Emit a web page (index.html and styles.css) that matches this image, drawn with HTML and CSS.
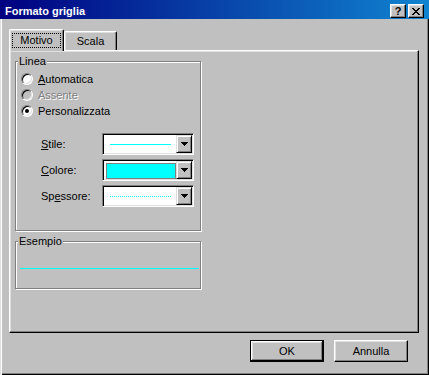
FILE: index.html
```html
<!DOCTYPE html>
<html lang="it">
<head>
    <meta charset="UTF-8">
    <title>Formato griglia</title>
    <link rel="stylesheet" href="styles.css">
</head>
<body>
    <div class="window">
        <div class="titlebar">
            <span class="title">Formato griglia</span>
            <div class="title-buttons">
                <span class="tbtn help">?</span>
                <span class="tbtn">
                    <svg width="8" height="7" viewBox="0 0 8 7">
                        <path d="M0 0h2v1h-2zM6 0h2v1h-2zM1 1h2v1h-2zM5 1h2v1h-2zM2 2h4v1h-4zM3 3h2v1h-2zM2 4h4v1h-4zM1 5h2v1h-2zM5 5h2v1h-2zM0 6h2v1h-2zM6 6h2v1h-2z"/>
                    </svg>
                </span>
            </div>
        </div>

        <div class="dialog">
            <div class="tabs">
                <div class="tab active"><span class="focus">Motivo</span></div>
                <div class="tab">Scala</div>
            </div>

            <div class="panel">
                <div class="group linea">
                    <div class="group-title">Linea</div>
                    <div class="options">
                        <div class="option"><span class="radio"></span><span><u>A</u>utomatica</span></div>
                        <div class="option disabled"><span class="radio"></span><span>Assente</span></div>
                        <div class="option"><span class="radio checked"></span><span>Personalizzata</span></div>
                    </div>

                    <div class="fields">
                        <span class="field-label"><u>S</u>tile:</span>
                        <div class="combo">
                            <div class="combo-value"><span class="line"></span></div>
                            <span class="drop">
                                <svg width="7" height="4" viewBox="0 0 7 4"><path d="M0 0h7v1h-7zM1 1h5v1h-5zM2 2h3v1h-3zM3 3h1v1h-1z"/></svg>
                            </span>
                        </div>

                        <span class="field-label"><u>C</u>olore:</span>
                        <div class="combo">
                            <div class="combo-value"><span class="swatch"></span></div>
                            <span class="drop">
                                <svg width="7" height="4" viewBox="0 0 7 4"><path d="M0 0h7v1h-7zM1 1h5v1h-5zM2 2h3v1h-3zM3 3h1v1h-1z"/></svg>
                            </span>
                        </div>

                        <span class="field-label">Sp<u>e</u>ssore:</span>
                        <div class="combo">
                            <div class="combo-value"><span class="line dotted"></span></div>
                            <span class="drop">
                                <svg width="7" height="4" viewBox="0 0 7 4"><path d="M0 0h7v1h-7zM1 1h5v1h-5zM2 2h3v1h-3zM3 3h1v1h-1z"/></svg>
                            </span>
                        </div>
                    </div>
                </div>

                <div class="group esempio">
                    <div class="group-title">Esempio</div>
                    <div class="sample-line"></div>
                </div>
            </div>

            <div class="actions">
                <button class="btn default">OK</button>
                <button class="btn">Annulla</button>
            </div>
        </div>
    </div>
</body>
</html>
```

FILE: styles.css
```css
* {
    box-sizing: border-box;
}

body {
    margin: 0;
    font-family: "Liberation Sans", Arial, sans-serif;
    font-size: 11px;
    line-height: 13px;
    color: #000;
    background: #c0c0c0;
}

.window {
    width: 429px;
    height: 375px;
    background: #c0c0c0;
    display: flex;
    flex-direction: column;
}

/* title bar */
.titlebar {
    height: 19px;
    flex-shrink: 0;
    display: flex;
    align-items: flex-end;
    justify-content: space-between;
    padding: 0 5px 1px 5px;
    background: linear-gradient(to right, #000080, #1084d0);
    color: #fff;
    font-weight: bold;
}

.title-buttons {
    display: flex;
    gap: 2px;
}

.tbtn {
    width: 16px;
    height: 14px;
    display: flex;
    align-items: center;
    justify-content: center;
    background: #c0c0c0;
    color: #000;
    border: 1px solid;
    border-color: #fff #000 #000 #fff;
    box-shadow: inset -1px -1px #808080, inset 1px 1px #dfdfdf;
}

.tbtn.help {
    font-size: 11px;
    line-height: 11px;
}

/* dialog body */
.dialog {
    flex: 1;
    padding: 10px 10px 0 9px;
    box-shadow: inset 1px 0 #dfdfdf, inset 2px 0 #fff, inset -1px -1px #000, inset -2px -2px #808080;
}

.tabs {
    display: flex;
    align-items: flex-end;
    height: 21px;
}

.tab {
    height: 19px;
    display: flex;
    align-items: center;
    justify-content: center;
    border: 1px solid;
    border-bottom: 0;
    border-color: #fff #000 #000 #fff;
    border-radius: 2px 2px 0 0;
    box-shadow: inset -1px 0 #808080, inset 1px 1px #dfdfdf;
    background: #c0c0c0;
    width: 53px;
}

.tab.active {
    width: 55px;
    height: 22px;
    margin-bottom: -1px;
    position: relative;
    z-index: 1;
}

.focus {
    border: 1px dotted #000;
    padding: 0 7px;
    line-height: 13px;
}

.panel {
    height: 283px;
    border: 1px solid;
    border-color: #fff #000 #000 #fff;
    box-shadow: inset -1px -1px #808080, inset 1px 1px #dfdfdf;
    padding: 10px 0 0 5px;
}

/* group boxes */
.group {
    width: 186px;
    border: 1px solid #808080;
    box-shadow: 1px 1px #fff, inset 1px 1px #fff;
}

.linea {
    height: 170px;
}

.esempio {
    height: 48px;
    margin-top: 10px;
}

.group-title {
    width: fit-content;
    margin: -7px 0 0 2px;
    padding: 0 1px;
    background: #c0c0c0;
}

.options {
    margin-top: 3px;
}

.option {
    height: 16px;
    display: flex;
    align-items: center;
    gap: 5px;
    padding-left: 5px;
}

.option.disabled {
    color: #808080;
    text-shadow: 1px 1px #fff;
}

.radio {
    width: 12px;
    height: 12px;
    flex-shrink: 0;
    display: flex;
    align-items: center;
    justify-content: center;
    border-radius: 50%;
    background: #fff;
    border: 1px solid;
    border-color: #808080 #fff #fff #808080;
    box-shadow: inset 1px 1px #000, inset -1px -1px #dfdfdf;
}

.disabled .radio {
    background: #c0c0c0;
}

.radio.checked::after {
    content: "";
    width: 4px;
    height: 4px;
    border-radius: 50%;
    background: #000;
}

.fields {
    display: grid;
    grid-template-columns: 61px 92px;
    grid-auto-rows: 22px;
    row-gap: 4px;
    margin-top: 14px;
    padding-left: 25px;
    align-items: center;
}

.combo {
    height: 22px;
    display: flex;
    padding: 1px;
    background: #fff;
    border: 1px solid;
    border-color: #808080 #fff #fff #808080;
    box-shadow: inset 1px 1px #000, inset -1px -1px #dfdfdf;
}

.combo-value {
    flex: 1;
    display: flex;
    align-items: center;
    padding-left: 6px;
}

.line {
    width: 61px;
    height: 1px;
    background: #00ffff;
}

.line.dotted {
    background: repeating-linear-gradient(to right, #00ffff 0 1px, transparent 1px 2px);
}

.swatch {
    width: 70px;
    height: 16px;
    margin: 1px 0 0 -4px;
    background: #00ffff;
    border: 1px solid #808080;
}

.drop {
    width: 16px;
    height: 18px;
    display: flex;
    align-items: center;
    justify-content: center;
    background: #c0c0c0;
    border: 1px solid;
    border-color: #dfdfdf #000 #000 #dfdfdf;
    box-shadow: inset 1px 1px #fff, inset -1px -1px #808080;
}

.sample-line {
    width: 179px;
    height: 1px;
    margin: 20px 0 0 4px;
    background: #00ffff;
}

/* buttons */
.actions {
    display: flex;
    justify-content: flex-end;
    gap: 10px;
    margin: 7px 11px 0 0;
}

.btn {
    width: 74px;
    height: 22px;
    padding: 0;
    font: inherit;
    color: #000;
    background: #c0c0c0;
    border: 1px solid;
    border-color: #fff #000 #000 #fff;
    box-shadow: inset -1px -1px #808080, inset 1px 1px #dfdfdf;
}

.btn.default {
    border-color: #000;
    box-shadow: inset -1px -1px #000, inset 1px 1px #fff, inset -2px -2px #808080, inset 2px 2px #dfdfdf;
}
```
